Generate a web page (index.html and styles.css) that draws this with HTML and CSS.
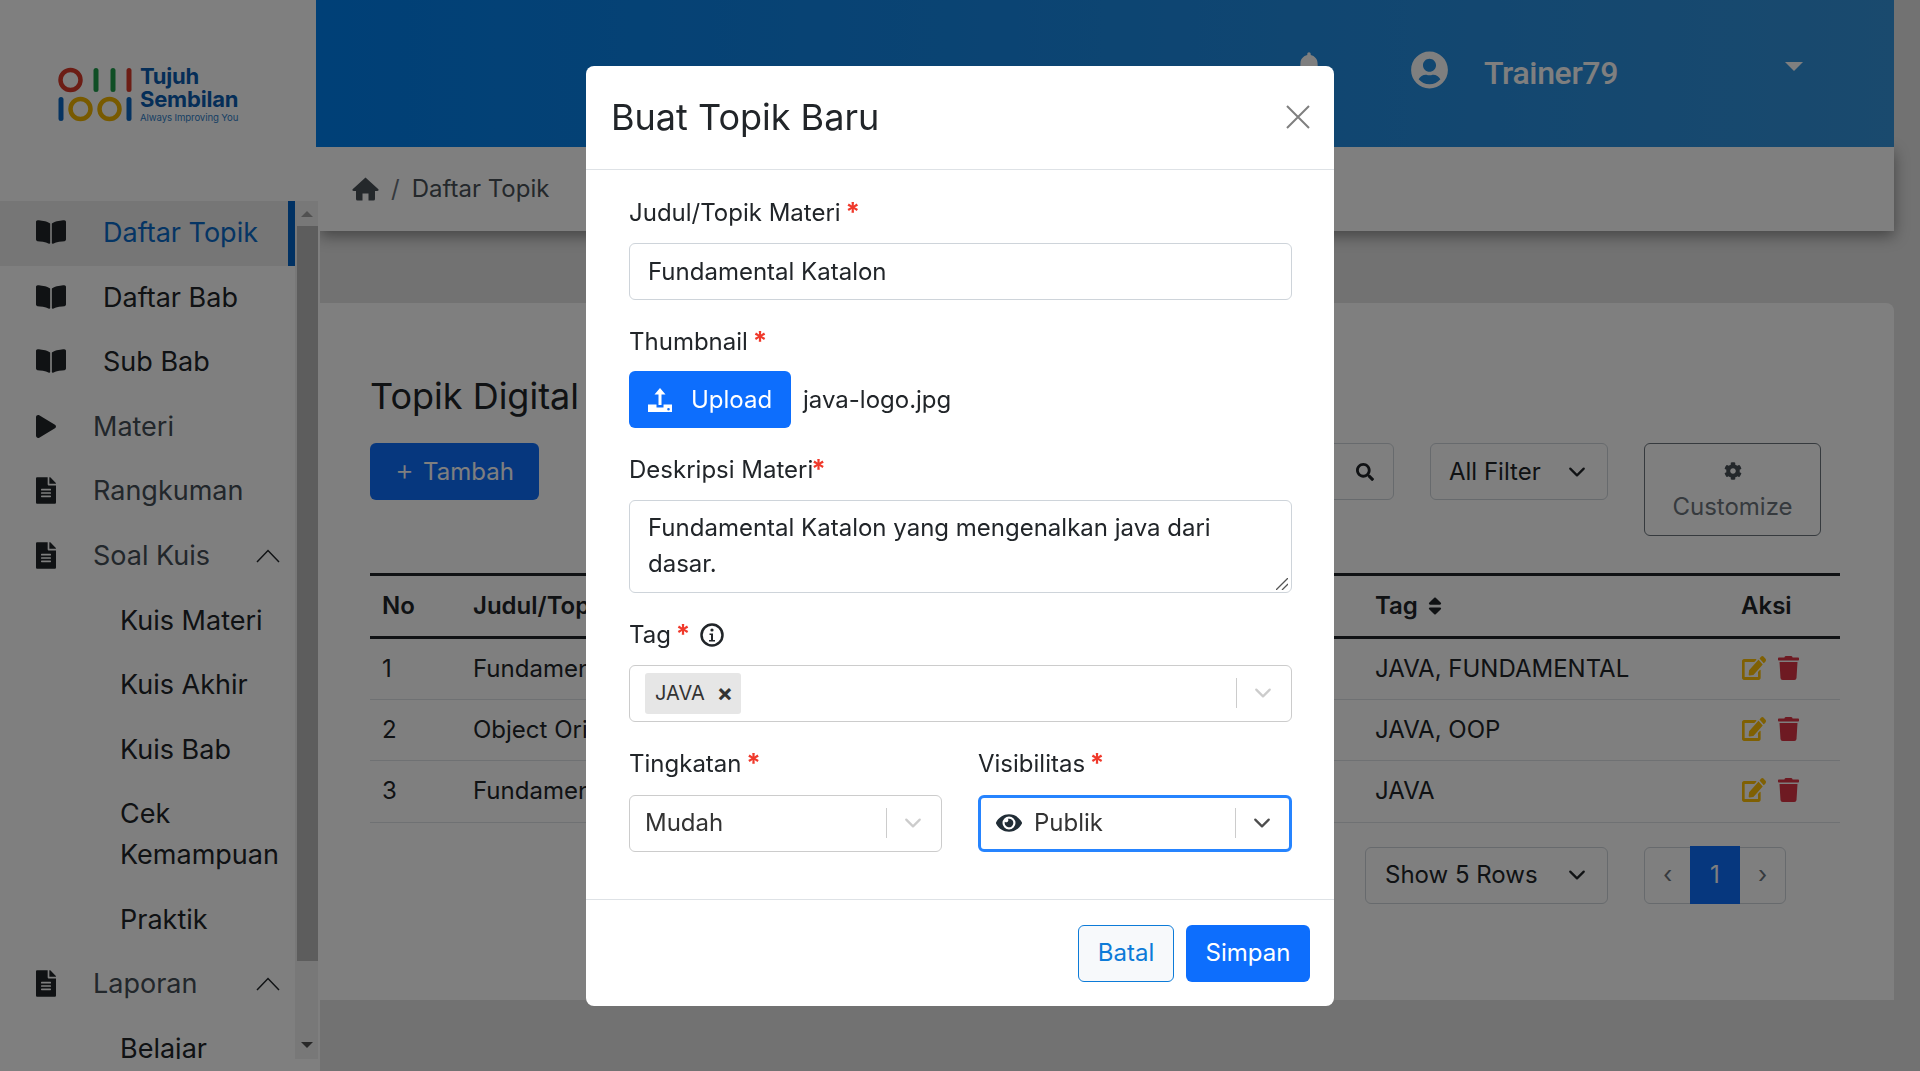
FILE: index.html
```html
<!DOCTYPE html>
<html lang="id">
<head>
    <meta charset="UTF-8">
    <meta name="viewport" content="width=device-width, initial-scale=1.0">
    <title>Daftar Topik</title>
    <link rel="stylesheet" href="styles.css">
</head>
<body>

    <svg class="icon-sprite" xmlns="http://www.w3.org/2000/svg">
        <symbol id="i-book" viewBox="0 28 576 456" preserveAspectRatio="none"><path d="M542.22 32.05c-54.8 3.11-163.72 14.43-230.96 55.59-4.64 2.84-7.27 7.89-7.27 13.17v363.87c0 11.55 12.63 18.85 23.28 13.49 69.18-34.82 169.23-44.32 218.7-46.92 16.89-.89 30.02-14.43 30.02-30.66V62.75c.01-17.71-15.35-31.74-33.77-30.7zM264.73 87.64C197.5 46.48 88.58 35.17 33.78 32.05 15.36 31.01 0 45.04 0 62.75V400.6c0 16.24 13.13 29.78 30.02 30.66 49.49 2.6 149.59 12.11 218.77 46.95 10.62 5.35 23.21-1.94 23.21-13.46V100.63c0-5.29-2.62-10.14-7.27-12.99z"/></symbol>
        <symbol id="i-file" viewBox="0 0 384 512"><path d="M224 136V0H24C10.7 0 0 10.7 0 24v464c0 13.3 10.7 24 24 24h336c13.3 0 24-10.7 24-24V160H248c-13.2 0-24-10.8-24-24zm64 236c0 6.6-5.4 12-12 12H108c-6.6 0-12-5.4-12-12v-8c0-6.6 5.4-12 12-12h168c6.6 0 12 5.4 12 12v8zm0-64c0 6.6-5.4 12-12 12H108c-6.6 0-12-5.4-12-12v-8c0-6.6 5.4-12 12-12h168c6.6 0 12 5.4 12 12v8zm0-72v8c0 6.6-5.4 12-12 12H108c-6.6 0-12-5.4-12-12v-8c0-6.6 5.4-12 12-12h168c6.6 0 12 5.4 12 12zm96-114.1v6.1H256V0h6.1c6.4 0 12.5 2.5 17 7l97.9 98c4.5 4.5 7 10.6 7 16.9z"/></symbol>
        <symbol id="i-play" viewBox="0 0 448 512"><path d="M424.4 214.7L72.4 6.6C43.8-10.3 0 6.1 0 47.9V464c0 37.5 40.7 60.1 72.4 41.3l352-208c31.4-18.5 31.5-64.1 0-82.6z"/></symbol>
        <symbol id="i-home" viewBox="0 0 27 24"><path d="M13.5 0.500L0.600 12.200Q-0.200 14 2 14H4V22a1.500 1.500 0 0 0 1.500 1.500H10.500V16.500H16.500V23.500H21.500a1.500 1.500 0 0 0 1.500-1.500V14H25Q27.200 14 26.400 12.200z"/></symbol>
        <symbol id="i-search" viewBox="0 0 512 512"><path d="M505 442.7L405.3 343c-4.5-4.5-10.6-7-17-7H372c27.6-35.3 44-79.7 44-128C416 93.1 322.9 0 208 0S0 93.1 0 208s93.1 208 208 208c48.3 0 92.7-16.4 128-44v16.3c0 6.4 2.5 12.5 7 17l99.7 99.7c9.4 9.4 24.6 9.4 33.9 0l28.3-28.3c9.4-9.4 9.4-24.6.1-34zM208 336c-70.7 0-128-57.2-128-128 0-70.7 57.2-128 128-128 70.7 0 128 57.2 128 128 0 70.7-57.2 128-128 128z"/></symbol>
        <symbol id="i-cog" viewBox="0 0 512 512"><path d="M487.4 315.7l-42.6-24.6c4.3-23.2 4.3-47 0-70.2l42.6-24.6c4.9-2.8 7.1-8.6 5.5-14-11.1-35.6-30-67.8-54.7-94.6-3.8-4.1-10-5.1-14.8-2.3L380.8 110c-17.9-15.4-38.5-27.3-60.8-35.1V25.8c0-5.6-3.9-10.5-9.4-11.7-36.7-8.2-74.3-7.8-109.2 0-5.5 1.2-9.4 6.1-9.4 11.7V75c-22.2 7.9-42.8 19.8-60.8 35.1L88.7 85.5c-4.9-2.8-11-1.9-14.8 2.3-24.7 26.7-43.6 58.9-54.7 94.6-1.7 5.4.6 11.2 5.5 14L67.3 221c-4.3 23.2-4.3 47 0 70.2l-42.6 24.6c-4.9 2.8-7.1 8.6-5.5 14 11.1 35.6 30 67.8 54.7 94.6 3.8 4.1 10 5.1 14.8 2.3l42.6-24.6c17.9 15.4 38.5 27.3 60.8 35.1v49.2c0 5.6 3.9 10.5 9.4 11.7 36.7 8.2 74.3 7.8 109.2 0 5.5-1.2 9.4-6.1 9.4-11.7v-49.2c22.2-7.9 42.8-19.8 60.8-35.1l42.6 24.6c4.9 2.8 11 1.9 14.8-2.3 24.7-26.7 43.6-58.9 54.7-94.6 1.5-5.5-.7-11.3-5.6-14.1zM256 336c-44.1 0-80-35.9-80-80s35.9-80 80-80 80 35.9 80 80-35.9 80-80 80z"/></symbol>
        <symbol id="i-trash" viewBox="0 0 448 512"><path d="M432 32H312l-9.4-18.7A24 24 0 0 0 281.1 0H166.8a23.72 23.72 0 0 0-21.4 13.3L136 32H16A16 16 0 0 0 0 48v32a16 16 0 0 0 16 16h416a16 16 0 0 0 16-16V48a16 16 0 0 0-16-16zM53.2 467a48 48 0 0 0 47.9 45h245.8a48 48 0 0 0 47.9-45L416 128H32z"/></symbol>
        <symbol id="i-edit" viewBox="0 0 576 512" preserveAspectRatio="none"><path d="M402.6 83.2l90.2 90.2c3.8 3.8 3.8 10 0 13.8L274.4 405.6l-92.8 10.3c-12.4 1.4-22.9-9.1-21.5-21.5l10.3-92.8L388.8 83.2c3.8-3.8 10-3.8 13.8 0zm162-22.9l-48.8-48.8c-15.2-15.2-39.9-15.2-55.2 0l-35.4 35.4c-3.8 3.8-3.8 10 0 13.8l90.2 90.2c3.8 3.8 10 3.8 13.8 0l35.4-35.4c15.2-15.3 15.2-40 0-55.2zM384 346.2V448H64V128h229.8c3.2 0 6.2-1.3 8.5-3.5l40-40c7.6-7.6 2.2-20.5-8.5-20.5H48C21.5 64 0 85.5 0 112v352c0 26.5 21.5 48 48 48h352c26.5 0 48-21.5 48-48V306.2c0-10.7-12.9-16-20.5-8.5l-40 40c-2.2 2.3-3.5 5.3-3.5 8.5z"/></symbol>
        <symbol id="i-user" viewBox="0 0 496 512"><path d="M248 8C111 8 0 119 0 256s111 248 248 248 248-111 248-248S385 8 248 8zm0 96c48.6 0 88 39.4 88 88s-39.4 88-88 88-88-39.4-88-88 39.4-88 88-88zm0 344c-58.7 0-111.3-26.6-146.5-68.2 18.8-35.4 55.6-59.8 98.5-59.8 2.4 0 4.8.4 7.1 1.1 13 4.2 26.6 6.9 40.9 6.9 14.3 0 28-2.7 40.9-6.9 2.3-.7 4.7-1.1 7.1-1.1 42.9 0 79.7 24.4 98.5 59.8C359.3 421.4 306.7 448 248 448z"/></symbol>
        <symbol id="i-eye" viewBox="0 0 576 512"><path d="M572.52 241.4C518.29 135.59 410.93 64 288 64S57.68 135.64 3.48 241.41a32.35 32.35 0 0 0 0 29.19C57.71 376.41 165.07 448 288 448s230.32-71.64 284.52-177.41a32.35 32.35 0 0 0 0-29.19zM288 400a144 144 0 1 1 144-144 143.93 143.93 0 0 1-144 144zm0-240a95.31 95.31 0 0 0-25.31 3.79 47.85 47.85 0 0 1-66.9 66.9A95.78 95.78 0 1 0 288 160z"/></symbol>
        <symbol id="i-bell" viewBox="0 0 448 512"><path d="M224 512c35.32 0 63.97-28.65 63.97-64H160.03c0 35.35 28.65 64 63.97 64zm215.39-149.71c-19.32-20.76-55.47-51.99-55.47-154.29 0-77.7-54.48-139.9-127.94-155.16V32c0-17.67-14.32-32-31.98-32s-31.98 14.33-31.98 32v20.84C118.56 68.1 64.08 130.3 64.08 208c0 102.3-36.15 133.53-55.47 154.29-6 6.45-8.66 14.16-8.61 21.71.11 16.4 12.98 32 32.1 32h383.8c19.12 0 32-15.6 32.1-32 .05-7.55-2.61-15.27-8.61-21.71z"/></symbol>
        <symbol id="i-sort" viewBox="0 0 320 512"><path d="M41 288h238c21.4 0 32.1 25.9 17 41L177 448c-9.4 9.4-24.6 9.4-33.9 0L24 329c-15.1-15.1-4.4-41 17-41zm255-105L177 64c-9.4-9.4-24.6-9.4-33.9 0L24 183c-15.1 15.1-4.4 41 17 41h238c21.4 0 32.1-25.9 17-41z"/></symbol>
        <symbol id="i-down" viewBox="0 0 16 16"><path d="M2 5l6 6 6-6" fill="none" stroke="currentColor" stroke-width="2" stroke-linecap="round" stroke-linejoin="round"/></symbol>
        <symbol id="i-up" viewBox="0 0 24 14"><path d="M1 13L12 1.500 23 13" fill="none" stroke="currentColor" stroke-width="1.500"/></symbol>
    </svg>

    <div class="shell">
        <aside class="sidebar">
            <div class="logo">
                <svg class="logo-mark" viewBox="0 0 72 54">
                    <circle cx="12" cy="12" r="10" fill="none" stroke="#d93a2b" stroke-width="4.500"/>
                    <rect x="35" y="0" width="5" height="24" rx="2.500" fill="#1e9c4b"/>
                    <rect x="52" y="0" width="5" height="24" rx="2.500" fill="#1e9c4b"/>
                    <rect x="68" y="0" width="5" height="24" rx="2.500" fill="#d93a2b"/>
                    <rect x="0" y="29" width="5" height="24" rx="2.500" fill="#0a66c2"/>
                    <circle cx="22" cy="41" r="10" fill="none" stroke="#f0b400" stroke-width="4.500"/>
                    <circle cx="51" cy="41" r="10" fill="none" stroke="#f0b400" stroke-width="4.500"/>
                    <rect x="68" y="29" width="5" height="24" rx="2.500" fill="#0a66c2"/>
                </svg>
                <div class="logo-text">
                    <strong>Tujuh</strong>
                    <strong>Sembilan</strong>
                    <small>Always Improving You</small>
                </div>
            </div>
            <div class="nav-wrap">
                <nav class="nav">
                    <a class="nav-item active"><svg class="ic-book"><use href="#i-book"/></svg>Daftar Topik</a>
                    <a class="nav-item"><svg class="ic-book"><use href="#i-book"/></svg>Daftar Bab</a>
                    <a class="nav-item"><svg class="ic-book"><use href="#i-book"/></svg>Sub Bab</a>
                    <a class="nav-item muted"><svg class="ic-file"><use href="#i-play"/></svg>Materi</a>
                    <a class="nav-item muted"><svg class="ic-file"><use href="#i-file"/></svg>Rangkuman</a>
                    <a class="nav-item muted"><svg class="ic-file"><use href="#i-file"/></svg>Soal Kuis<svg class="ic-up"><use href="#i-up"/></svg></a>
                    <a class="nav-sub">Kuis Materi</a>
                    <a class="nav-sub">Kuis Akhir</a>
                    <a class="nav-sub">Kuis Bab</a>
                    <a class="nav-sub">Cek Kemampuan</a>
                    <a class="nav-sub">Praktik</a>
                    <a class="nav-item muted"><svg class="ic-file"><use href="#i-file"/></svg>Laporan<svg class="ic-up"><use href="#i-up"/></svg></a>
                    <a class="nav-sub">Belajar</a>
                </nav>
                <div class="scrollbar">
                    <span class="arrow-up"></span>
                    <span class="thumb"></span>
                    <span class="arrow-down"></span>
                </div>
            </div>
        </aside>

        <div class="main">
            <header class="topbar">
                <svg class="ic-bell"><use href="#i-bell"/></svg>
                <svg class="ic-user"><use href="#i-user"/></svg>
                <span class="user-name">Trainer79</span>
                <span class="user-caret"></span>
            </header>

            <div class="breadcrumb">
                <svg class="ic-home"><use href="#i-home"/></svg>
                <span class="crumb-sep">/</span>
                <span>Daftar Topik</span>
            </div>

            <section class="card">
                <h3 class="card-title">Topik Digital</h3>
                <div class="toolbar">
                    <button class="btn-add"><span class="plus">+</span>Tambah</button>
                    <div class="toolbar-right">
                        <div class="search-box"><svg class="ic-search"><use href="#i-search"/></svg></div>
                        <div class="select-box">All Filter<svg class="ic-down"><use href="#i-down"/></svg></div>
                        <button class="btn-customize"><svg class="ic-cog"><use href="#i-cog"/></svg>Customize</button>
                    </div>
                </div>

                <table class="topic-table">
                    <colgroup>
                        <col class="col-no"><col class="col-title"><col class="col-tag"><col class="col-action">
                    </colgroup>
                    <thead>
                        <tr><th>No</th><th>Judul/Topik</th><th>Tag <svg class="ic-sort"><use href="#i-sort"/></svg></th><th>Aksi</th></tr>
                    </thead>
                    <tbody>
                        <tr>
                            <td>1</td><td>Fundamental Katalon</td><td>JAVA, FUNDAMENTAL</td>
                            <td><div class="actions"><svg class="ic-edit"><use href="#i-edit"/></svg><svg class="ic-trash"><use href="#i-trash"/></svg></div></td>
                        </tr>
                        <tr>
                            <td>2</td><td>Object Oriented Programming</td><td>JAVA, OOP</td>
                            <td><div class="actions"><svg class="ic-edit"><use href="#i-edit"/></svg><svg class="ic-trash"><use href="#i-trash"/></svg></div></td>
                        </tr>
                        <tr>
                            <td>3</td><td>Fundamental Java</td><td>JAVA</td>
                            <td><div class="actions"><svg class="ic-edit"><use href="#i-edit"/></svg><svg class="ic-trash"><use href="#i-trash"/></svg></div></td>
                        </tr>
                    </tbody>
                </table>

                <div class="table-foot">
                    <div class="select-box rows-box">Show 5 Rows<svg class="ic-down"><use href="#i-down"/></svg></div>
                    <div class="pager">
                        <span class="page-arrow">‹</span>
                        <span class="page-current">1</span>
                        <span class="page-arrow">›</span>
                    </div>
                </div>
            </section>
        </div>
    </div>

    <div class="backdrop">
        <div class="modal">
            <div class="modal-header">
                <h5 class="modal-title">Buat Topik Baru</h5>
                <svg class="modal-close" viewBox="0 0 24 24"><path d="M1 1l22 22M23 1L1 23" fill="none" stroke="currentColor" stroke-width="2"/></svg>
            </div>

            <form class="modal-body">
                <div class="form-group">
                    <label>Judul/Topik Materi <span class="req">*</span></label>
                    <input class="form-input" type="text" value="Fundamental Katalon">
                </div>
                <div class="form-group">
                    <label>Thumbnail <span class="req">*</span></label>
                    <div class="upload-row">
                        <button type="button" class="btn-upload">
                            <svg class="ic-upload" viewBox="0 0 24 24"><path d="M12 0L6.500 6.500h4V17h3V6.500h4zM0 16.500h8.500V19.500h7v-3H24V24H0zM20.500 20a1.300 1.300 0 1 0 0 2.600 1.300 1.300 0 0 0 0-2.600z" fill="currentColor" fill-rule="evenodd"/></svg>
                            Upload
                        </button>
                        <span>java-logo.jpg</span>
                    </div>
                </div>
                <div class="form-group">
                    <label>Deskripsi Materi<span class="req">*</span></label>
                    <div class="area-wrap">
                        <textarea class="form-input form-area">Fundamental Katalon yang mengenalkan java dari dasar.</textarea>
                        <svg class="area-grip" viewBox="0 0 12 12"><path d="M0 12L12 0M6 12l6-6" fill="none" stroke="#555" stroke-width="1.300"/></svg>
                    </div>
                </div>
                <div class="form-group">
                    <label>Tag <span class="req">*</span>
                        <svg class="ic-info" viewBox="0 0 24 24"><circle cx="12" cy="12" r="10.500" fill="none" stroke="currentColor" stroke-width="2.500"/><circle cx="12" cy="7" r="1.600" fill="currentColor"/><path d="M9.500 10.500h3.500V17h2v1.500H9V17h2v-5H9.500z" fill="currentColor"/></svg>
                    </label>
                    <div class="rselect">
                        <div class="rselect-value">
                            <span class="chip">JAVA<span class="chip-x">×</span></span>
                        </div>
                        <span class="rselect-sep"></span>
                        <svg class="rselect-arrow"><use href="#i-down"/></svg>
                    </div>
                </div>
                <div class="form-row">
                    <div class="form-group">
                        <label>Tingkatan <span class="req">*</span></label>
                        <div class="rselect">
                            <div class="rselect-value">Mudah</div>
                            <span class="rselect-sep"></span>
                            <svg class="rselect-arrow"><use href="#i-down"/></svg>
                        </div>
                    </div>
                    <div class="form-group">
                        <label>Visibilitas <span class="req">*</span></label>
                        <div class="rselect focused">
                            <div class="rselect-value"><svg class="ic-eye"><use href="#i-eye"/></svg>Publik</div>
                            <span class="rselect-sep"></span>
                            <svg class="rselect-arrow"><use href="#i-down"/></svg>
                        </div>
                    </div>
                </div>
            </form>

            <div class="modal-footer">
                <button class="btn-cancel">Batal</button>
                <button class="btn-save">Simpan</button>
            </div>
        </div>
    </div>

</body>
</html>
```

FILE: styles.css
```css
* {
    box-sizing: border-box;
}
html, body {
    height: 100%;
}
body {
    margin: 0;
    overflow: hidden;
    font-family: "Inter", "Liberation Sans", sans-serif;
    font-size: 24px;
    line-height: 1.5;
    color: #212529;
    background-color: #e4e4e4;
}
button {
    font: inherit;
    cursor: pointer;
}
svg {
    fill: currentColor;
    flex-shrink: 0;
}
.icon-sprite {
    display: none;
}
.shell {
    display: flex;
    height: 1071px;
}

/* sidebar */
.sidebar {
    width: 320px;
    height: 100%;
    flex-shrink: 0;
    position: relative;
    z-index: 2;
    background-color: #fff;
}
.logo {
    height: 201px;
    padding: 68px 0 0 58px;
    display: flex;
    gap: 9px;
}
.logo-mark {
    width: 73px;
    height: 54px;
    overflow: visible;
}
.logo-text {
    display: flex;
    flex-direction: column;
    margin-top: -3px;
    color: #0a5cb0;
}
.logo-text strong {
    font-size: 22px;
    line-height: 23px;
    font-weight: 700;
    letter-spacing: -0.2px;
}
.logo-text small {
    font-size: 9.6px;
    line-height: 13px;
    letter-spacing: -0.1px;
    color: #2f7fc9;
}
.nav-wrap {
    display: flex;
    height: 858px;
    padding-right: 2px;
}
.nav {
    flex: 1;
    min-width: 0;
    overflow: hidden;
    font-size: 27px;
}
.nav-item {
    display: flex;
    align-items: center;
    gap: 37px;
    padding: 12px 0 12px 36px;
    line-height: 40.6px;
    color: #212529;
}
.nav-item.active {
    background-color: #ececec;
    border-right: 7px solid #0063c7;
    color: #0a6bc9;
}
.nav-item.active svg {
    color: #212529;
}
.nav-item.muted {
    color: #454e57;
}
.nav-item.muted svg {
    color: #212529;
}
.nav-sub {
    display: block;
    padding: 12px 20px 12px 120px;
    line-height: 40.6px;
    color: #212529;
}
.ic-book {
    width: 30px;
    height: 24px;
    margin-top: -2px;
}
.ic-file {
    width: 20px;
    height: 27px;
    margin-top: -2px;
}
.nav-item .ic-up {
    width: 24px;
    height: 14px;
    margin-left: auto;
    margin-right: 15px;
    color: #0a5cb0;
}
.scrollbar {
    width: 23px;
    display: flex;
    flex-direction: column;
    align-items: center;
    background-color: #f1f1f1;
}
.thumb {
    width: 21px;
    margin-left: 2px;
    height: 735px;
    background-color: #bababa;
}
.arrow-up {
    width: 0;
    height: 0;
    margin: 10px 0 9px;
    border: 6px solid transparent;
    border-top: 0;
    border-bottom-color: #a3a3a3;
}
.arrow-down {
    width: 0;
    height: 0;
    margin-top: auto;
    margin-bottom: 11px;
    border: 6px solid transparent;
    border-bottom: 0;
    border-top-color: #505050;
}

/* main */
.main {
    width: 1574px;
    flex-shrink: 0;
}
.topbar {
    height: 147px;
    margin-left: -4px;
    position: relative;
    z-index: 3;
    display: flex;
    align-items: flex-start;
    color: #fff;
    background: linear-gradient(90deg, #0080ee 0%, #3494dc 100%);
}
.ic-bell {
    width: 24px;
    height: 28px;
    margin: 52px 0 0 981px;
}
.ic-user {
    width: 37px;
    height: 38px;
    margin: 51px 0 0 90px;
}
.user-name {
    margin: 49px 0 0 36px;
    font-family: "Roboto", sans-serif;
    font-size: 32px;
    line-height: 48px;
    font-weight: 500;
    letter-spacing: -0.35px;
}
.user-caret {
    margin: 62px 0 0 167px;
    width: 0;
    height: 0;
    border: 9px solid transparent;
    border-bottom: 0;
    border-top-color: #fff;
}
.breadcrumb {
    height: 84px;
    padding-left: 32px;
    position: relative;
    display: flex;
    align-items: center;
    gap: 12px;
    color: #495057;
    background-color: #fff;
    box-shadow: 0 5px 14px rgba(0, 0, 0, 0.4);
}
.ic-home {
    width: 27px;
    height: 24px;
}
.crumb-sep {
    color: #6c757d;
}
.card {
    margin-top: 72px;
    height: 697px;
    padding: 72px 0 0 50px;
    background-color: #fff;
    border-radius: 0 8px 0 0;
}
.card-title {
    margin: 0 0 25px;
    font-size: 36px;
    line-height: 43px;
    font-weight: 400;
}
.toolbar {
    display: flex;
    align-items: flex-start;
    justify-content: space-between;
    padding-right: 73px;
}
.toolbar-right {
    display: flex;
    align-items: flex-start;
    gap: 36px;
}
.btn-add {
    height: 57px;
    width: 169px;
    border: 0;
    border-radius: 6px;
    color: #fff;
    background-color: #0d6efd;
}
.plus {
    margin-right: 9px;
    font-size: 29px;
    line-height: 1;
    font-weight: 300;
}
.search-box {
    width: 400px;
    height: 57px;
    padding-right: 19px;
    display: flex;
    align-items: center;
    justify-content: flex-end;
    border: 1.5px solid #ced4da;
    border-radius: 6px;
}
.ic-search {
    width: 18px;
    height: 18px;
}
.select-box {
    width: 178px;
    height: 57px;
    padding: 0 21px 0 18px;
    display: flex;
    align-items: center;
    justify-content: space-between;
    border: 1.5px solid #ced4da;
    border-radius: 6px;
    color: #212529;
}
.ic-down {
    width: 18px;
    height: 18px;
}
.btn-customize {
    width: 177px;
    height: 93px;
    display: flex;
    flex-direction: column;
    align-items: center;
    gap: 9px;
    padding-top: 18px;
    color: #6c757d;
    background: none;
    border: 1.5px solid #6c757d;
    border-radius: 6px;
}
.btn-customize .ic-cog {
    width: 18px;
    height: 18px;
    color: #495057;
}
.topic-table {
    width: 1470px;
    margin-top: 37px;
    table-layout: fixed;
    border-collapse: collapse;
}
.col-no {
    width: 91px;
}
.col-title {
    width: 902px;
}
.col-tag {
    width: 366px;
}
.col-action {
    width: 111px;
}
.topic-table th {
    height: 63px;
    padding: 0 12px;
    text-align: left;
    font-weight: 600;
    border-top: 3px solid #212529;
    border-bottom: 3px solid #212529;
}
.topic-table td {
    height: 61.5px;
    padding: 0 12px;
    border-bottom: 1.5px solid #dee2e6;
    white-space: nowrap;
}
.ic-sort {
    width: 14px;
    height: 22px;
    margin-left: 4px;
    vertical-align: -3px;
}
.actions {
    display: flex;
    align-items: center;
    gap: 12px;
    margin: -2px 0 0 1px;
}
.ic-edit {
    width: 24px;
    height: 24px;
    color: #ffc107;
}
.ic-trash {
    width: 21px;
    height: 24px;
    color: #dc3545;
}
.table-foot {
    display: flex;
    justify-content: flex-end;
    gap: 36px;
    margin-top: 24px;
    padding-right: 108px;
}
.rows-box {
    width: 243px;
    padding-left: 19px;
}
.pager {
    width: 142px;
    height: 57px;
    display: flex;
    border: 1.5px solid #ced4da;
    border-radius: 6px;
    color: #6c757d;
}
.page-arrow {
    flex: 1;
    display: flex;
    align-items: center;
    justify-content: center;
}
.page-current {
    width: 50px;
    margin: -1.5px 0;
    display: flex;
    align-items: center;
    justify-content: center;
    color: #fff;
    background-color: #0d6efd;
}

/* modal */
.backdrop {
    position: fixed;
    inset: 0;
    z-index: 10;
    display: flex;
    justify-content: center;
    align-items: flex-start;
    padding-top: 66px;
    background-color: rgba(0, 0, 0, 0.5);
}
.modal {
    width: 748px;
    background-color: #fff;
    border-radius: 8px;
}
.modal-header {
    height: 104px;
    padding: 0 24px 2px 25px;
    display: flex;
    align-items: center;
    justify-content: space-between;
    border-bottom: 1.5px solid #dee2e6;
}
.modal-title {
    margin: 0;
    font-size: 36px;
    font-weight: 400;
}
.modal-close {
    width: 24px;
    height: 24px;
    color: #7f7f7f;
}
.modal-body {
    padding: 25px 42px 23.5px 43px;
}
.form-group {
    margin-bottom: 24px;
}
.form-group label {
    display: block;
    margin-bottom: 11.5px;
}
.form-row label {
    margin-bottom: 13px;
}
.req {
    margin-left: -2px;
    font-size: 26px;
    line-height: 1;
    font-weight: 700;
    color: #f0392b;
}
.form-input {
    display: block;
    width: 100%;
    height: 57px;
    padding: 9px 18px;
    font: inherit;
    color: #212529;
    background-color: #fff;
    border: 1.5px solid #ced4da;
    border-radius: 6px;
    outline: none;
}
.form-area {
    height: 93.5px;
    resize: none;
}
.area-wrap {
    position: relative;
}
.area-grip {
    position: absolute;
    right: 4px;
    bottom: 3px;
    width: 12px;
    height: 12px;
}
.upload-row {
    display: flex;
    align-items: center;
    gap: 12px;
    margin-bottom: 1px;
}
.btn-upload {
    width: 162px;
    height: 57px;
    display: flex;
    align-items: center;
    gap: 19px;
    padding: 0 0 0 19px;
    color: #fff;
    background-color: #0d6efd;
    border: 0;
    border-radius: 6px;
}
.ic-upload {
    width: 24px;
    height: 24px;
}
.ic-info {
    width: 24px;
    height: 24px;
    margin-left: 3px;
    vertical-align: -4px;
}
.rselect {
    height: 57px;
    display: flex;
    align-items: center;
    padding-right: 19px;
    border: 1.5px solid #ccc;
    border-radius: 6px;
}
.rselect.focused {
    border: 3px solid #2684ff;
    padding-right: 18px;
}
.rselect-value {
    flex: 1;
    min-width: 0;
    padding-left: 15px;
    display: flex;
    align-items: center;
    color: #333;
}
.rselect-sep {
    width: 1.5px;
    height: 30px;
    margin-right: 17px;
    background-color: #ccc;
}
.rselect-arrow {
    width: 18px;
    height: 18px;
    color: #ccc;
}
.focused .rselect-arrow {
    color: #4d4d4d;
}
.chip {
    height: 41px;
    width: 96px;
    padding-left: 10px;
    display: flex;
    align-items: center;
    font-size: 20px;
    background-color: #e6e6e6;
    border-radius: 3px;
}
.chip-x {
    margin-left: 12px;
    font-size: 24px;
    font-weight: 700;
}
.ic-eye {
    width: 26px;
    height: 24px;
    margin-right: 12px;
    color: #212d36;
}
.form-row {
    display: grid;
    grid-template-columns: 313px 1fr;
    column-gap: 36px;
}
.modal-footer {
    height: 107px;
    padding: 0 24px;
    display: flex;
    align-items: center;
    justify-content: flex-end;
    gap: 12px;
    border-top: 1.5px solid #dee2e6;
}
.btn-cancel {
    width: 96px;
    height: 57px;
    color: #0d7bd8;
    background-color: #f7f9fb;
    border: 1.5px solid #0d7bd8;
    border-radius: 6px;
}
.btn-save {
    width: 124px;
    height: 57px;
    color: #fff;
    background-color: #0d6efd;
    border: 0;
    border-radius: 6px;
}
```
